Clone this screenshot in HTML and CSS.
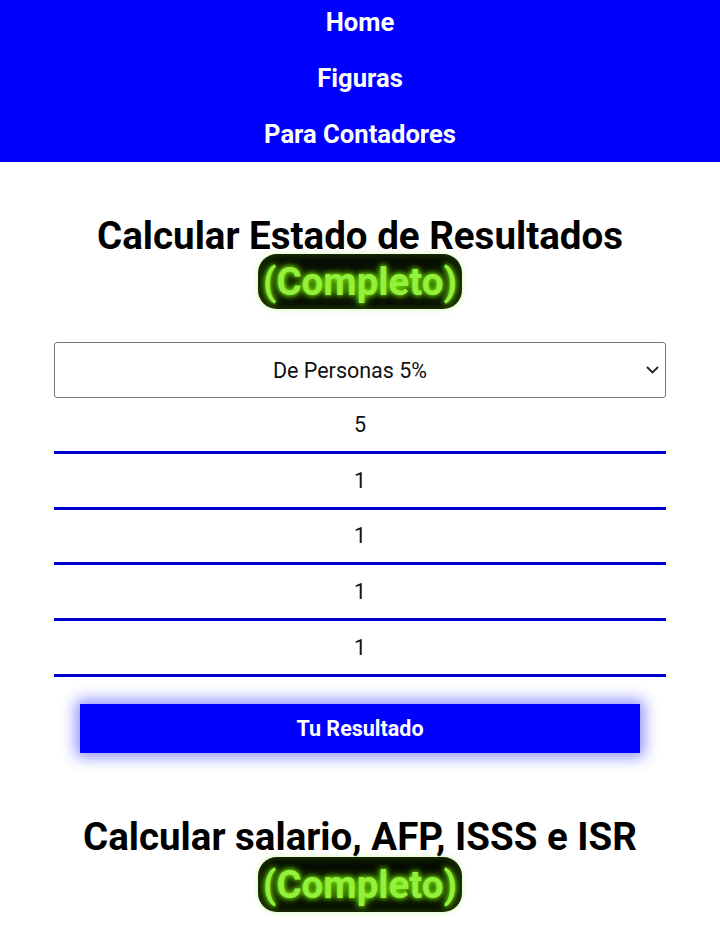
FILE: index.html
```html
<!DOCTYPE html>
<html lang="es">
<head>
<meta charset="utf-8">
<title>Calculadoras</title>
<link rel="stylesheet" href="styles.css">
</head>
<body>
<nav class="nav">
  <a class="nav-link" href="#">Home</a>
  <a class="nav-link" href="#">Figuras</a>
  <a class="nav-link" href="#">Para Contadores</a>
</nav>
<main class="main">
  <section class="calc">
    <h1 class="title"><span class="title-text">Calcular Estado de Resultados</span> <span class="badge">(Completo)</span></h1>
    <form class="form">
      <div class="select-wrap">
        <select class="select">
          <option>De Personas 5%</option>
        </select>
        <svg class="chev" width="13" height="8" viewBox="0 0 13 8"><path d="M1 1 L6.5 6.5 L12 1" fill="none" stroke="#222" stroke-width="1.8"/></svg>
      </div>
      <input class="field" type="text" value="5">
      <input class="field" type="text" value="1">
      <input class="field" type="text" value="1">
      <input class="field" type="text" value="1">
      <input class="field" type="text" value="1">
      <button class="btn" type="button">Tu Resultado</button>
    </form>
  </section>
  <section class="calc calc-second">
    <h1 class="title"><span class="title-text">Calcular salario, AFP, ISSS e ISR</span> <span class="badge">(Completo)</span></h1>
  </section>
</main>
</body>
</html>
```
FILE: styles.css
```css
* { box-sizing: border-box; }
body {
  margin: 0;
  font-family: Roboto, "Liberation Sans", sans-serif;
  background: #fff;
  color: #000;
}
.nav {
  background: #0000ff;
  display: flex;
  flex-direction: column;
  align-items: center;
}
.nav-link {
  color: #fff;
  text-decoration: none;
  font-weight: 700;
  font-size: 25.6px;
  line-height: 30px;
  padding: 7px 0 19px;
}
.nav-link:last-child { padding-bottom: 13px; }
.main {
  display: flex;
  flex-direction: column;
  align-items: center;
}
.calc {
  width: 612px;
  display: flex;
  flex-direction: column;
  align-items: center;
}
.title {
  display: flex;
  flex-direction: column;
  align-items: center;
  font-size: 38.5px;
  font-weight: 700;
  text-align: center;
  margin: 54px 0 33px;
}
.title-text {
  line-height: 40px;
}
.badge {
  display: block;
  margin-top: -2px;
  background: #070c03;
  color: #93f03c;
  border-radius: 19px;
  padding: 5px 5px;
  line-height: 45px;
  text-shadow: 0 0 5px #7fff00, 0 0 10px rgba(127, 255, 0, 0.8);
  box-shadow: 0 0 6px rgba(140, 240, 58, 0.35), inset 0 0 8px rgba(127, 255, 0, 0.25);
}
.calc-second .title { margin-top: 64px; }
.calc-second .badge { margin-top: 0; }
.form {
  width: 612px;
  display: flex;
  flex-direction: column;
  align-items: center;
}
.select-wrap {
  position: relative;
  width: 100%;
}
.select {
  display: block;
  width: 100%;
  height: 56px;
  appearance: none;
  -webkit-appearance: none;
  background: #fff;
  border: 1px solid #767676;
  border-radius: 3px;
  font-family: Roboto, "Liberation Sans", sans-serif;
  font-size: 21.5px;
  color: #111;
  text-align: center;
  text-align-last: center;
  padding: 0 40px 0 20px;
}
.chev {
  position: absolute;
  right: 7px;
  top: 24px;
  pointer-events: none;
}
.field {
  display: block;
  width: 100%;
  height: 55.75px;
  border: none;
  border-bottom: 3px solid #0000cc;
  font-family: Roboto, "Liberation Sans", sans-serif;
  font-size: 21.5px;
  color: #111;
  text-align: center;
  padding: 0;
  outline: none;
}
.btn {
  margin-top: 27px;
  width: 560px;
  height: 49px;
  background: #0000ff;
  color: #fff;
  border: none;
  font-family: Roboto, "Liberation Sans", sans-serif;
  font-weight: 700;
  font-size: 21.5px;
  box-shadow: 0 0 14px 4px rgba(0, 0, 255, 0.45);
}
```
